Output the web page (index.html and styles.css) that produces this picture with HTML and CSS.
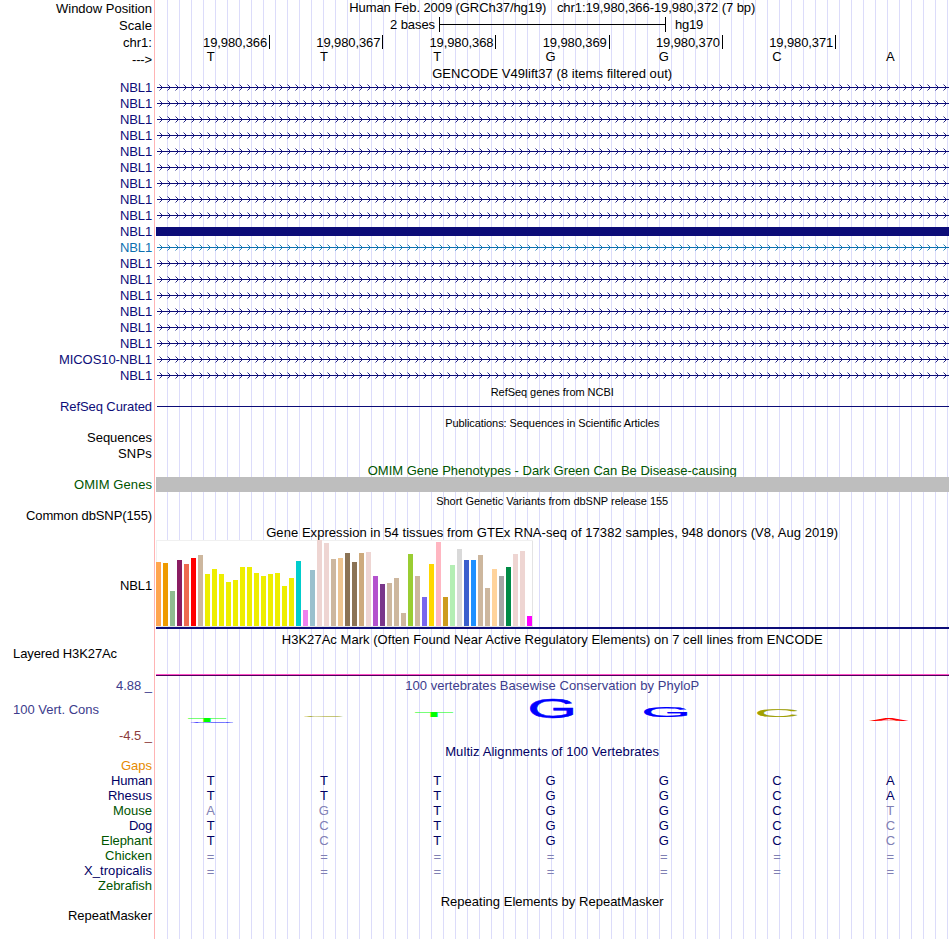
FILE: index.html
```html
<!DOCTYPE html>
<html lang="en">
<head>
<meta charset="utf-8">
<title>Genome Browser hg19</title>
<link rel="stylesheet" href="styles.css">
</head>
<body>
<main class="browser">
  <div class="row h17"><div class="label" data-w="96">Window Position</div><div class="title up"><span data-w="406">Human Feb. 2009 (GRCh37/hg19) &nbsp; chr1:19,980,366-19,980,372 (7 bp)</span></div></div>
  <div class="row h17"><div class="label" data-w="33">Scale</div><div class="scale"><span class="scale-text" data-w="45">2 bases</span><div class="scale-bar"></div><span class="assembly" data-w="28">hg19</span></div></div>
  <div class="row h16"><div class="label chrom" data-w="29">chr1:</div><div class="cols ruler" id="ruler"></div></div>
  <div class="row h15"><div class="label low" data-w="20">---&gt;</div><div class="bases cols first" data-bases="TTTGGCA"></div></div>
  <div class="row h15"><div class="title down"><span data-w="240">GENCODE V49lift37 (8 items filtered out)</span></div></div>
  <section id="genes"></section>
  <div class="row h16"><div class="title small"><span data-w="123">RefSeq genes from NCBI</span></div></div>
  <div class="row h15"><div class="label navy raise" data-w="92">RefSeq Curated</div><div class="refseq"></div></div>
  <div class="row h15"><div class="title small down"><span data-w="214">Publications: Sequences in Scientific Articles</span></div></div>
  <div class="row h16"><div class="label" data-w="65">Sequences</div></div>
  <div class="row h16"><div class="label" data-w="34">SNPs</div></div>
  <div class="row h15 omim-title"><div class="title green"><span data-w="369">OMIM Gene Phenotypes - Dark Green Can Be Disease-causing</span></div></div>
  <div class="row h15"><div class="label green" data-w="78">OMIM Genes</div><div class="omim"></div></div>
  <div class="row h17"><div class="title small down"><span data-w="232">Short Genetic Variants from dbSNP release 155</span></div></div>
  <div class="row h15"><div class="label raise" data-w="126">Common dbSNP(155)</div></div>
  <div class="row h16"><div class="title down"><span data-w="572">Gene Expression in 54 tissues from GTEx RNA-seq of 17382 samples, 948 donors (V8, Aug 2019)</span></div></div>
  <div class="row gtex"><div class="label" data-w="32">NBL1</div><div class="expression"><div class="bars" id="bars"></div></div></div>
  <div class="row h21"><div class="title"><span data-w="541">H3K27Ac Mark (Often Found Near Active Regulatory Elements) on 7 cell lines from ENCODE</span></div></div>
  <div class="row h3k"><div class="label left"><span data-w="104">Layered H3K27Ac</span></div><div class="signal"></div></div>
  <div class="row phylop">
    <div class="limits"><div class="limit max" data-w="36">4.88 _</div><div class="limit name"><span data-w="86">100 Vert. Cons</span></div><div class="limit min" data-w="33">-4.5 _</div></div>
    <div><div class="title indigo"><span data-w="294">100 vertebrates Basewise Conservation by PhyloP</span></div><svg class="logo" id="logo" width="793" height="50" viewBox="156 696 793 50"></svg></div>
  </div>
  <div class="row h12"><div class="title navy2"><span data-w="214">Multiz Alignments of 100 Vertebrates</span></div></div>
  <section id="align"></section>
  <div class="row h16"><div class="title down"><span data-w="223">Repeating Elements by RepeatMasker</span></div></div>
  <div class="row h15"><div class="label raise" data-w="84">RepeatMasker</div></div>
</main>
<script src="main.js"></script>
</body>
</html>
```
FILE: styles.css
```css
body { margin: 0; background: #fff; font: 13px "Liberation Sans", Arial, sans-serif; color: #000; }
.browser {
  position: relative; width: 949px; height: 939px; overflow: hidden; white-space: nowrap;
  background:
    linear-gradient(#ffb4b4, #ffb4b4) 154px 0 / 1px 100% no-repeat,
    repeating-linear-gradient(90deg, #dcdcfa 0 1px, transparent 1px 12px) 167px 0 / 782px 100% no-repeat;
}
.row { display: grid; grid-template-columns: 152px 793px; column-gap: 4px; }
.h12 { height: 12px; line-height: 12px; }
.h15 { height: 15px; line-height: 15px; }
.h16 { height: 16px; line-height: 16px; }
.h17 { height: 17px; line-height: 17px; }
.h21 { height: 21px; line-height: 21px; }
.label { grid-column: 1; justify-self: end; }
.label.left { justify-self: start; padding-left: 13px; }
.label.low { padding-top: 2px; }
.label.chrom { padding-top: 1px; }
.raise { line-height: 13px; }
.title { grid-column: 2; text-align: center; margin-right: 0.6px; }
.title.up { line-height: 15px; }
.title.down { padding-top: 1px; }
.small { font-size: 11px; }
.omim-title { line-height: 17px; }
.navy { color: #0c0c78; }
.navy2 { color: #000064; }
.sky { color: #0c70b0; }
.green { color: #005500; }
.orange { color: #e68a00; }
.indigo { color: #3c3c8c; }

.scale { display: flex; }
.scale-text { width: 45px; margin-left: 234px; line-height: 15px; }
.scale-bar { width: 225px; height: 15px; margin: 0 9px 0 4px; border: solid #000; border-width: 0 1px; background: linear-gradient(#000, #000) 0 7px / 100% 1px no-repeat; }
.assembly { line-height: 15px; }

.cols { display: grid; grid-template-columns: repeat(7, 1fr); }
.ruler { width: 792.6px; margin-left: -0.2px; padding-top: 1px; }
.tick { display: flex; justify-content: flex-end; gap: 2px; margin-right: -1px; }
.tick::after { content: ""; width: 1px; height: 14px; background: #000; }
.tick:last-child { visibility: hidden; }
.bases { margin-left: -2px; margin-right: 2px; text-align: center; color: #000064; }
.bases.first { color: #000; line-height: 14px; }
.bases .dim { color: #8080b4; }
.bases .gap { color: #8080b4; padding-top: 1px; }

.gene { display: block; }
.exon { height: 9px; margin-top: 3px; background: #0c0c78; }
.refseq { height: 1px; margin: 6px 0 0 1px; background: #0c0c78; }
.omim { background: #bebebe; }

.gtex { height: 89px; grid-template-rows: 89px; line-height: 92px; }
.expression { border-bottom: 2px solid #0c0c78; }
.bars { display: flex; align-items: flex-end; gap: 2px; width: 377px; height: 87px; box-sizing: border-box; padding-bottom: 1px; background: #fff; box-shadow: inset 1px 1px #f0f0f0, inset -1px -1px #e4e4e4; }
.bar { width: 5px; }

.h3k { height: 26px; line-height: 8px; }
.signal { align-self: end; height: 2px; background: linear-gradient(#ff50c8 50%, #50005a 50%); }
.phylop { height: 70px; line-height: 20px; }
.limit { text-align: right; }
.limits { display: flex; flex-direction: column; align-items: flex-end; }
.max, .name { color: #3c3c8c; }
.name { line-height: 28px; align-self: flex-start; padding-left: 13px; }
.min { color: #8c3c3c; line-height: 24px; }
.logo { display: block; overflow: visible; font-family: "Liberation Sans", Arial, sans-serif; font-size: 100px; }
```
FILE: main.js
```js
const byId = id => document.getElementById(id);

// Coordinate ruler
byId('ruler').innerHTML = [366, 367, 368, 369, 370, 371, 372]
  .map(n => n === 372 ? '<div class="tick"></div>' : `<div class="tick"><span data-w="64">19,980,${n}</span></div>`).join('');

// Gene transcripts: intron line with strand chevrons
function intron(color) {
  let d = '';
  for (let x = 3; x < 793; x += 8) d += `M${x + 0.5} 4.5l3 3l-3 3`;
  return `<svg class="gene" width="793" height="16" fill="none" stroke="${color}"><path d="M1 7.5H793"/><path stroke-width=".9" d="${d}"/></svg>`;
}
let genes = '';
for (let i = 0; i < 19; i++) {
  const name = i === 17 ? 'MICOS10-NBL1' : 'NBL1';
  const sky = i === 10;
  genes += `<div class="row h16"><div class="label ${sky ? 'sky' : 'navy'}" data-w="${i === 17 ? 93 : 32}">${name}</div>` +
    (i === 9 ? '<div class="exon"></div>' : intron(sky ? '#0c70b0' : '#0c0c78')) + '</div>';
}
byId('genes').innerHTML = genes;

// Tissue expression: colour and bar height
const Y = '#eeee00', T = '#cdb79e', P = '#eed5d2';
const tissues = [['#ffa54f', 64], ['#ee9a00', 63], ['#8fbc8f', 35], ['#8b1c62', 66], ['#ee6a50', 62], ['#ff0000', 68], [T, 71],
  [Y, 52], [Y, 57], [Y, 52], [Y, 44], [Y, 46], [Y, 59], [Y, 59], [Y, 53], [Y, 50], [Y, 52], [Y, 53], [Y, 40], [Y, 48],
  ['#00cdcd', 65], ['#ee82ee', 16], ['#9ac0cd', 56], [P, 86], [P, 83], [T, 67], ['#eec591', 68], ['#8b7355', 73], ['#8b7355', 64],
  ['#cdaa7d', 73], [P, 74], ['#b452cd', 50], ['#7a378b', 42], [T, 43], [T, 48], [T, 13], ['#9acd32', 72], [T, 50], ['#7a67ee', 29],
  ['#ffd700', 62], ['#ffb6c1', 84], ['#cd9b1d', 29], ['#b4eeb4', 61], ['#d9d9d9', 77], ['#3a5fcd', 66], ['#1e90ff', 66], [T, 71],
  [T, 38], ['#ffd39b', 57], ['#a6a6a6', 50], ['#008b45', 59], [P, 72], [P, 75], ['#ff00ff', 10]];
byId('bars').innerHTML = tissues.map(([c, h]) => `<div class="bar" style="background:${c};height:${h}px"></div>`).join('');

// Multiple alignment
const species = [['Gaps', 'orange', '', 31], ['Human', 'navy2', 'TTTGGCA', 41], ['Rhesus', 'navy2', 'TTTGGCA', 44], ['Mouse', 'green', 'agTGGCt', 39],
  ['Dog', 'navy2', 'TcTGGCc', 23], ['Elephant', 'green', 'TcTGGCc', 51], ['Chicken', 'green', '=======', 47],
  ['X_tropicalis', 'navy2', '=======', 68], ['Zebrafish', 'green', '', 54]];
byId('align').innerHTML = species.map(([n, c, b, w]) =>
  `<div class="row h15"><div class="label ${c}" data-w="${w}">${n}</div><div class="bases cols" data-bases="${b}"></div></div>`).join('');
document.querySelectorAll('[data-bases]').forEach(el => {
  el.innerHTML = [...el.dataset.bases].map(b =>
    `<span class="${b === '=' ? 'gap' : b > 'Z' ? 'dim' : ''}">${b.toUpperCase()}</span>`).join('');
});

// Conservation logo: letters stretched to their score
const ctx = document.createElement('canvas').getContext('2d');
ctx.font = '100px "Liberation Sans"';
byId('logo').innerHTML = [['T', '#00ff00', 188.3, 718, 37.4, 4.2], ['G', '#0000ff', 191, 721.8, 42, 1.1], ['C', '#a0a000', 305, 716, 39, 1],
  ['T', '#00ff00', 415.3, 712, 37.4, 5.2], ['G', '#0000ff', 530.5, 698.2, 42.5, 19.6], ['G', '#0000ff', 644.5, 706.2, 42.5, 10.6],
  ['C', '#a0a000', 757.5, 709.2, 40, 7.6], ['A', '#ff0000', 869, 718, 40, 2.6]].map(([ch, color, x, y, w, h]) => {
  const m = ctx.measureText(ch);
  const sx = w / (m.actualBoundingBoxLeft + m.actualBoundingBoxRight);
  const sy = h / (m.actualBoundingBoxAscent + m.actualBoundingBoxDescent);
  // A hairline stroke keeps the stretched stems heavy
  return `<text fill="${color}" stroke="${color}" stroke-width="${ch === 'A' ? 0 : 1.5}" transform="translate(${x + m.actualBoundingBoxLeft * sx} ${y + m.actualBoundingBoxAscent * sy}) scale(${sx} ${sy})">${ch}</text>`;
}).join('');

document.querySelectorAll('[data-w]').forEach(el => {
  const range = document.createRange();
  range.selectNodeContents(el);
  const n = el.textContent.length;
  const gap = (el.dataset.w - range.getBoundingClientRect().width) / n;
  el.style.letterSpacing = gap.toFixed(3) + 'px';
});
```
